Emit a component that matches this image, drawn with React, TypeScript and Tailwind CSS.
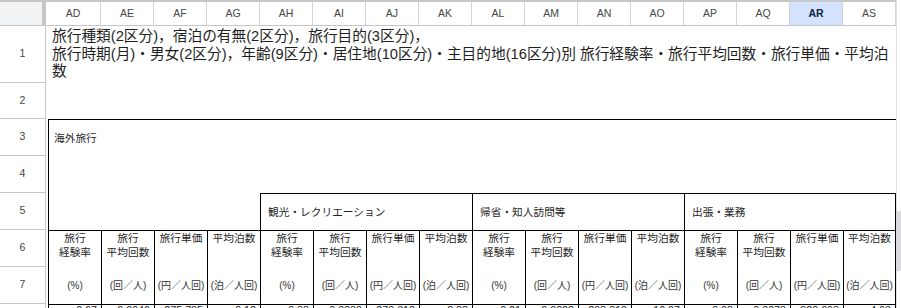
import React from "react";

const cols = ["AD", "AE", "AF", "AG", "AH", "AI", "AJ", "AK", "AL", "AM", "AN", "AO", "AP", "AQ", "AR", "AS"];
const rowHeights = ["h-[57px]", "h-[36px]", "h-[37px]", "h-[37px]", "h-[37px]", "h-[37px]", "h-[37px]", "h-[37px]"];
const groups = ["観光・レクリエーション", "帰省・知人訪問等", "出張・業務"];
const heads = [["旅行", "経験率"], ["旅行", "平均回数"], ["旅行単価"], ["平均泊数"]];
const units = ["(%)", "(回／人)", "(円／人回)", "(泊／人回)"];
const row8 = ["0.67", "0.0046", "275,785", "9.12", "0.38", "0.0030", "279,312", "8.88", "0.21", "0.0022", "293,813", "10.07", "0.08", "0.0073", "320,693", "4.03"];

export default function App() {
  return (
    <div className="w-[901px] h-[308px] overflow-hidden bg-white flex font-['Liberation_Sans','Noto_Sans_CJK_JP',sans-serif] text-[#1f1f1f]">
      <div className="w-[896px] flex flex-col shrink-0">
        {/* column letters */}
        <div className="flex h-[26px] shrink-0 border-t-[2px] border-b border-[#c7c7c7] text-[10.5px] text-[#444746]">
          <div className="w-[46px] shrink-0 bg-[#f1f3f4] border-r-4 border-[#c4c7c5]" />
          {cols.map((c, i) => (
            <div
              key={c}
              className={
                (i === 0 ? "w-[55px] " : "w-[53px] ") +
                (c === "AR" ? "bg-[#d3e3fd] font-bold text-[#0b1f44] " : "") +
                "shrink-0 flex items-center justify-center border-r border-[#d3d3d3]"
              }
            >
              {c}
            </div>
          ))}
        </div>

        <div className="flex">
          {/* row numbers */}
          <div className="w-[48px] shrink-0 flex flex-col">
            {rowHeights.map((h, i) => (
              <div
                key={i}
                className={h + " w-[46px] flex items-center justify-center border-r border-b border-[#c7c7c7] text-[10.5px] text-[#444746]"}
              >
                {i < 7 ? i + 1 : ""}
              </div>
            ))}
          </div>

          {/* sheet body */}
          <div className="grid grid-cols-[repeat(16,53px)] grid-rows-[57px_36px_37px_37px_37px_37px_37px_37px]">
            <div className="col-span-16 pl-1 pt-[2px] text-[14.7px] leading-[17.5px] whitespace-nowrap overflow-hidden">
              旅行種類(2区分)，宿泊の有無(2区分)，旅行目的(3区分)，
              <br />
              旅行時期(月)・男女(2区分)，年齢(9区分)・居住地(10区分)・主目的地(16区分)別 旅行経験率・旅行平均回数・旅行単価・平均泊
              <br />
              数
            </div>
            <div className="col-span-16" />

            <div className="col-span-16 border-t border-l border-black flex items-center pl-[5px] text-[10.7px]">
              海外旅行
            </div>
            <div className="col-span-16 border-l border-black" />

            <div className="col-span-4 border-l border-black" />
            {groups.map((g, i) => (
              <div
                key={g}
                className={
                  "col-span-4 border-t border-l border-black flex items-center pl-[7px] text-[10.7px] " +
                  (i === 2 ? "border-r" : "")
                }
              >
                {g}
              </div>
            ))}

            {cols.map((c, i) => (
              <div
                key={"h" + c}
                className={
                  "border-t border-l border-black flex flex-col items-center text-[10.7px] leading-[14px] " +
                  (i === 15 ? "border-r" : "")
                }
              >
                {heads[i % 4].map((t) => (
                  <span key={t}>{t}</span>
                ))}
              </div>
            ))}

            {cols.map((c, i) => (
              <div
                key={"u" + c}
                className={
                  "border-l border-black flex items-center justify-center text-[10px] text-[#333] " +
                  (i === 15 ? "border-r" : "")
                }
              >
                {units[i % 4]}
              </div>
            ))}

            {row8.map((v, i) => (
              <div
                key={"v" + i}
                className={
                  "border-t border-l border-black flex items-start justify-end pr-1 text-[10.7px] leading-none " +
                  (i === 15 ? "border-r" : "")
                }
              >
                {v}
              </div>
            ))}
          </div>
        </div>
      </div>

      {/* vertical scrollbar strip */}
      <div className="flex-1 border-l border-[#dadce0] pt-[26px]">
        <div className="mt-[185px] h-[60px] bg-[#dadce0]" />
      </div>
    </div>
  );
}
